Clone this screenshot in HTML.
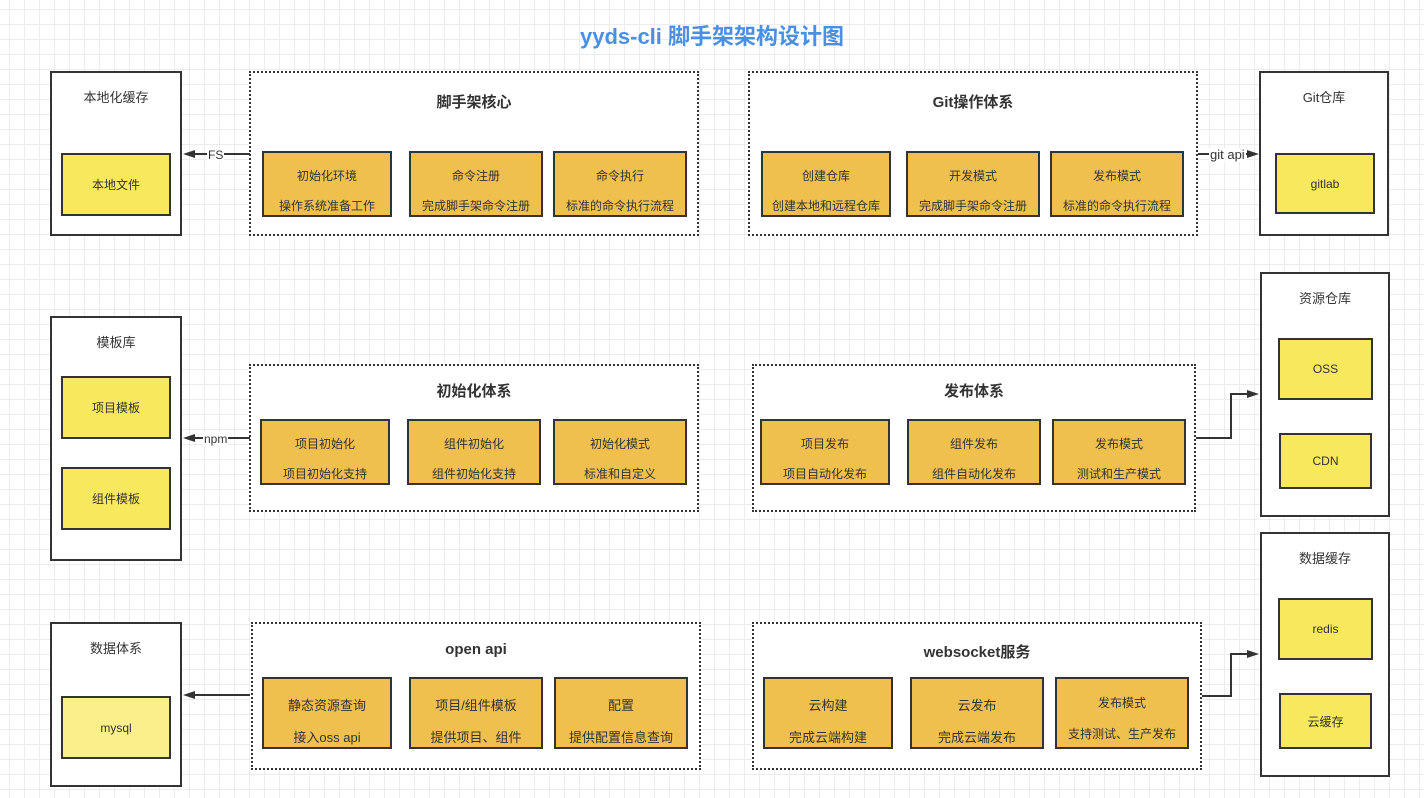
<!DOCTYPE html>
<html><head><meta charset="utf-8">
<style>
*{margin:0;padding:0;box-sizing:border-box}
body{width:1424px;height:798px;overflow:hidden;position:relative;background-color:#fff;
background-image:linear-gradient(#ececec 1px,transparent 1px),linear-gradient(90deg,#ececec 1px,transparent 1px);
background-size:15px 15px;background-position:-6px -6px;
font-family:"Liberation Sans","Noto Sans CJK SC",sans-serif;color:#333}
.b{position:absolute;border:2px solid #333;background:#fff}
.d{position:absolute;border:2px dotted #333;background:#fff}
.lbl{position:absolute;left:0;right:0;text-align:center;font-size:13px}
.ttl{position:absolute;left:0;right:0;text-align:center;font-size:15px;font-weight:bold}
.y{position:absolute;border:2px solid #333;background:#f8e85e;display:flex;align-items:center;justify-content:center;font-size:12px}
.o{position:absolute;border:2px solid #333;background:#f0c04e;font-size:12px;text-align:center}
.o .a{position:absolute;left:0;right:0}
.big{font-size:13px}
.t{position:absolute;font-size:12px;background:#fff;line-height:14px;padding:0 1px}
</style></head><body>
<div style="position:absolute;left:0;right:0;top:19px;text-align:center;font-size:22px;font-weight:bold;color:#4a90e2">yyds-cli 脚手架架构设计图</div>

<div class="b" style="left:50px;top:71px;width:132px;height:165px"><div class="lbl" style="top:14px">本地化缓存</div></div>
<div class="y" style="left:61px;top:153px;width:110px;height:63px">本地文件</div>

<div class="b" style="left:50px;top:316px;width:132px;height:245px"><div class="lbl" style="top:14px">模板库</div></div>
<div class="y" style="left:61px;top:376px;width:110px;height:63px">项目模板</div>
<div class="y" style="left:61px;top:467px;width:110px;height:63px">组件模板</div>

<div class="b" style="left:50px;top:622px;width:132px;height:165px"><div class="lbl" style="top:14px">数据体系</div></div>
<div class="y" style="left:61px;top:696px;width:110px;height:63px;background:#faef8a">mysql</div>

<div class="b" style="left:1259px;top:71px;width:130px;height:165px"><div class="lbl" style="top:14px">Git仓库</div></div>
<div class="y" style="left:1275px;top:153px;width:100px;height:61px">gitlab</div>

<div class="b" style="left:1260px;top:272px;width:130px;height:245px"><div class="lbl" style="top:14px">资源仓库</div></div>
<div class="y" style="left:1278px;top:338px;width:95px;height:62px">OSS</div>
<div class="y" style="left:1279px;top:433px;width:93px;height:56px">CDN</div>

<div class="b" style="left:1260px;top:532px;width:130px;height:245px"><div class="lbl" style="top:14px">数据缓存</div></div>
<div class="y" style="left:1278px;top:598px;width:95px;height:62px">redis</div>
<div class="y" style="left:1279px;top:693px;width:93px;height:56px">云缓存</div>

<div class="d" style="left:249px;top:71px;width:450px;height:165px"><div class="ttl" style="top:18px">脚手架核心</div></div>
<div class="o" style="left:262px;top:151px;width:130px;height:66px"><div class="a" style="top:14px">初始化环境</div><div class="a" style="top:44px">操作系统准备工作</div></div>
<div class="o" style="left:409px;top:151px;width:134px;height:66px"><div class="a" style="top:14px">命令注册</div><div class="a" style="top:44px">完成脚手架命令注册</div></div>
<div class="o" style="left:553px;top:151px;width:134px;height:66px"><div class="a" style="top:14px">命令执行</div><div class="a" style="top:44px">标准的命令执行流程</div></div>

<div class="d" style="left:748px;top:71px;width:450px;height:165px"><div class="ttl" style="top:18px">Git操作体系</div></div>
<div class="o" style="left:761px;top:151px;width:130px;height:66px"><div class="a" style="top:14px">创建仓库</div><div class="a" style="top:44px">创建本地和远程仓库</div></div>
<div class="o" style="left:906px;top:151px;width:134px;height:66px"><div class="a" style="top:14px">开发模式</div><div class="a" style="top:44px">完成脚手架命令注册</div></div>
<div class="o" style="left:1050px;top:151px;width:134px;height:66px"><div class="a" style="top:14px">发布模式</div><div class="a" style="top:44px">标准的命令执行流程</div></div>

<div class="d" style="left:249px;top:364px;width:450px;height:148px"><div class="ttl" style="top:14px">初始化体系</div></div>
<div class="o" style="left:260px;top:419px;width:130px;height:66px"><div class="a" style="top:14px">项目初始化</div><div class="a" style="top:44px">项目初始化支持</div></div>
<div class="o" style="left:407px;top:419px;width:134px;height:66px"><div class="a" style="top:14px">组件初始化</div><div class="a" style="top:44px">组件初始化支持</div></div>
<div class="o" style="left:553px;top:419px;width:134px;height:66px"><div class="a" style="top:14px">初始化模式</div><div class="a" style="top:44px">标准和自定义</div></div>

<div class="d" style="left:752px;top:364px;width:444px;height:148px"><div class="ttl" style="top:14px">发布体系</div></div>
<div class="o" style="left:760px;top:419px;width:130px;height:66px"><div class="a" style="top:14px">项目发布</div><div class="a" style="top:44px">项目自动化发布</div></div>
<div class="o" style="left:907px;top:419px;width:134px;height:66px"><div class="a" style="top:14px">组件发布</div><div class="a" style="top:44px">组件自动化发布</div></div>
<div class="o" style="left:1052px;top:419px;width:134px;height:66px"><div class="a" style="top:14px">发布模式</div><div class="a" style="top:44px">测试和生产模式</div></div>

<div class="d" style="left:251px;top:622px;width:450px;height:148px"><div class="ttl" style="top:17px">open api</div></div>
<div class="o big" style="left:262px;top:677px;width:130px;height:72px"><div class="a" style="top:16px">静态资源查询</div><div class="a" style="top:48px">接入oss api</div></div>
<div class="o big" style="left:409px;top:677px;width:134px;height:72px"><div class="a" style="top:16px">项目/组件模板</div><div class="a" style="top:48px">提供项目、组件</div></div>
<div class="o big" style="left:554px;top:677px;width:134px;height:72px"><div class="a" style="top:16px">配置</div><div class="a" style="top:48px">提供配置信息查询</div></div>

<div class="d" style="left:752px;top:622px;width:450px;height:148px"><div class="ttl" style="top:17px">websocket服务</div></div>
<div class="o big" style="left:763px;top:677px;width:130px;height:72px"><div class="a" style="top:16px">云构建</div><div class="a" style="top:48px">完成云端构建</div></div>
<div class="o big" style="left:910px;top:677px;width:134px;height:72px"><div class="a" style="top:16px">云发布</div><div class="a" style="top:48px">完成云端发布</div></div>
<div class="o" style="left:1055px;top:677px;width:134px;height:72px"><div class="a" style="top:15px">发布模式</div><div class="a" style="top:46px">支持测试、生产发布</div></div>

<svg style="position:absolute;left:0;top:0" width="1424" height="798">
<g stroke="#333" stroke-width="2" fill="none">
<line x1="250" y1="154" x2="192" y2="154"/>
<line x1="250" y1="438" x2="192" y2="438"/>
<line x1="250" y1="695" x2="192" y2="695"/>
<line x1="1198" y1="154" x2="1250" y2="154"/>
<polyline points="1196,438 1231,438 1231,394 1250,394"/>
<polyline points="1202,696 1231,696 1231,654 1250,654"/>
</g>
<g fill="#333">
<polygon points="183,154 195,150 195,158"/>
<polygon points="183,438 195,434 195,442"/>
<polygon points="183,695 195,691 195,699"/>
<polygon points="1259,154 1247,150 1247,158"/>
<polygon points="1259,394 1247,390 1247,398"/>
<polygon points="1259,654 1247,650 1247,658"/>
</g>
</svg>
<div class="t" style="left:207px;top:148px">FS</div>
<div class="t" style="left:203px;top:432px">npm</div>
<div class="t" style="left:1209px;top:148px;font-size:13px">git api</div>
</body></html>
